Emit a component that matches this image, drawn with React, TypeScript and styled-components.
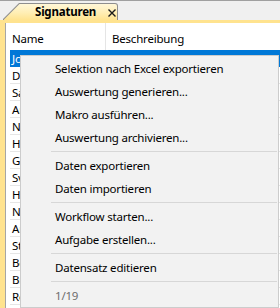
import React from "react";
import styled, { createGlobalStyle } from "styled-components";

const GlobalStyle = createGlobalStyle`
  html, body { margin: 0; padding: 0; }
  body {
    background: #f0f0f0;
    font-family: "Noto Sans", "Open Sans", sans-serif;
    font-size: 11.5px;
    letter-spacing: -0.2px;
    color: #000;
  }
`;

const Window = styled.div`
  position: relative;
  width: 280px;
  height: 308px;
  overflow: hidden;
  display: flex;
  flex-direction: column;
  background: #f0f0f0;
  border-top: 1px solid #a0a0a0;
  box-sizing: border-box;
`;

const TabStrip = styled.div`
  height: 19px;
  display: flex;
  align-items: flex-end;
  padding-left: 3px;
  flex-shrink: 0;
`;

const TabOuter = styled.div`
  width: 115px;
  height: 17px;
  background: #8e8e8e;
  border-top-right-radius: 3px;
  clip-path: polygon(16px 0, 100% 0, 100% 100%, 0 100%, 0 16px);
  display: flex;
  padding: 1px 1px 0 1px;
  box-sizing: border-box;
`;

const TabInner = styled.div`
  flex: 1;
  background: linear-gradient(#fff7d8, #ffeeb4 55%, #ffe38f);
  border-top-right-radius: 2px;
  clip-path: polygon(15.5px 0, 100% 0, 100% 100%, 0 100%, 0 15.5px);
  display: flex;
  align-items: center;
  padding-left: 31px;
  gap: 12px;
`;

const TabLabel = styled.span`
  font-weight: 700;
  font-size: 11.5px;
  line-height: 14px;
`;

const CloseIcon = styled.svg`
  width: 8px;
  height: 8px;
  margin-top: 2px;
`;

const Frame = styled.div`
  flex: 1;
  display: flex;
  background: #ffe38f;
  padding: 3px 0 0 5px;
  min-height: 0;
`;

const Panel = styled.div`
  flex: 1;
  background: #fff;
  border-left: 1px solid #a6a6a6;
  display: flex;
  flex-direction: column;
  min-height: 0;
`;

const HeaderRow = styled.div`
  height: 27px;
  display: grid;
  grid-template-columns: 100px 1fr;
  flex-shrink: 0;
`;

const HeaderCell = styled.div<{ $divider?: boolean }>`
  display: flex;
  align-items: center;
  padding: 3px 0 0 6px;
  border-right: ${(p) => (p.$divider ? "1px solid #e5e5e5" : "none")};
`;

const Rows = styled.div`
  display: flex;
  flex-direction: column;
  padding-left: 4px;
`;

const Row = styled.div<{ $selected?: boolean }>`
  height: 17px;
  flex-shrink: 0;
  box-sizing: border-box;
  display: grid;
  grid-template-columns: 96px 1fr;
  align-items: center;
  background: ${(p) => (p.$selected ? "#0078d7" : "transparent")};
  color: ${(p) => (p.$selected ? "#fff" : "#000")};
  border-bottom: 1px solid ${(p) => (p.$selected ? "#0078d7" : "#e6e6e6")};
`;

const Cell = styled.div`
  padding-left: 2px;
  white-space: nowrap;
  overflow: hidden;
`;

const Menu = styled.div`
  position: absolute;
  left: 20px;
  top: 54px;
  width: 259px;
  height: 253px;
  box-sizing: border-box;
  background: #f2f2f2;
  border: 1px solid #cccccc;
  padding-top: 1px;
  display: flex;
  flex-direction: column;
`;

const MenuItem = styled.div<{ $disabled?: boolean }>`
  height: 23px;
  flex-shrink: 0;
  display: flex;
  align-items: center;
  padding-left: 34px;
  color: ${(p) => (p.$disabled ? "#6d6d6d" : "#000")};
  white-space: nowrap;
`;

const Separator = styled.div`
  height: 5px;
  flex-shrink: 0;
  display: flex;
  align-items: center;
  padding: 0 1px 0 30px;
  &::after {
    content: "";
    flex: 1;
    height: 1px;
    background: #d7d7d7;
  }
`;

const rows = [
  ["Jonas Weber", "Signatur Vertrieb"],
  ["Daniel Koch", "Signatur Einkauf"],
  ["Sabine Wolf", "Signatur Verwaltung"],
  ["Anna Schulz", "Signatur Buchhaltung"],
  ["Nina Braun", "Signatur Personal"],
  ["Hans Becker", "Signatur Lager"],
  ["Gerd Hoffmann", "Signatur Technik"],
  ["Sven Richter", "Signatur Service"],
  ["Heike Klein", "Signatur Marketing"],
  ["Norbert Lang", "Signatur Versand"],
  ["Andrea Fuchs", "Signatur Empfang"],
  ["Stefan Maier", "Signatur Vertrieb"],
  ["Bernd Schmitt", "Signatur IT"],
  ["Brigitte Kraus", "Signatur Einkauf"],
  ["Rolf Neumann", "Signatur Lager"],
];

type Entry = { label: string; disabled?: boolean } | "sep";

const menu: Entry[] = [
  { label: "Selektion nach Excel exportieren" },
  { label: "Auswertung generieren..." },
  { label: "Makro ausführen..." },
  { label: "Auswertung archivieren..." },
  "sep",
  { label: "Daten exportieren" },
  { label: "Daten importieren" },
  "sep",
  { label: "Workflow starten..." },
  { label: "Aufgabe erstellen..." },
  "sep",
  { label: "Datensatz editieren" },
  "sep",
  { label: "1/19", disabled: true },
];

export default function App() {
  return (
    <>
      <GlobalStyle />
      <Window>
        <TabStrip>
          <TabOuter>
            <TabInner>
              <TabLabel>Signaturen</TabLabel>
              <CloseIcon viewBox="0 0 8 8">
                <path d="M0.5 0.5 L7.5 7.5 M7.5 0.5 L0.5 7.5" stroke="#1a1a1a" strokeWidth="1.4" fill="none" />
              </CloseIcon>
            </TabInner>
          </TabOuter>
        </TabStrip>
        <Frame>
          <Panel>
            <HeaderRow>
              <HeaderCell $divider>Name</HeaderCell>
              <HeaderCell>Beschreibung</HeaderCell>
            </HeaderRow>
            <Rows>
              {rows.map(([n, d], i) => (
                <Row key={i} $selected={i === 0}>
                  <Cell>{n}</Cell>
                  <Cell>{d}</Cell>
                </Row>
              ))}
            </Rows>
          </Panel>
        </Frame>
        <Menu>
          {menu.map((m, i) =>
            m === "sep" ? (
              <Separator key={i} />
            ) : (
              <MenuItem key={i} $disabled={m.disabled}>
                {m.label}
              </MenuItem>
            )
          )}
        </Menu>
      </Window>
    </>
  );
}
